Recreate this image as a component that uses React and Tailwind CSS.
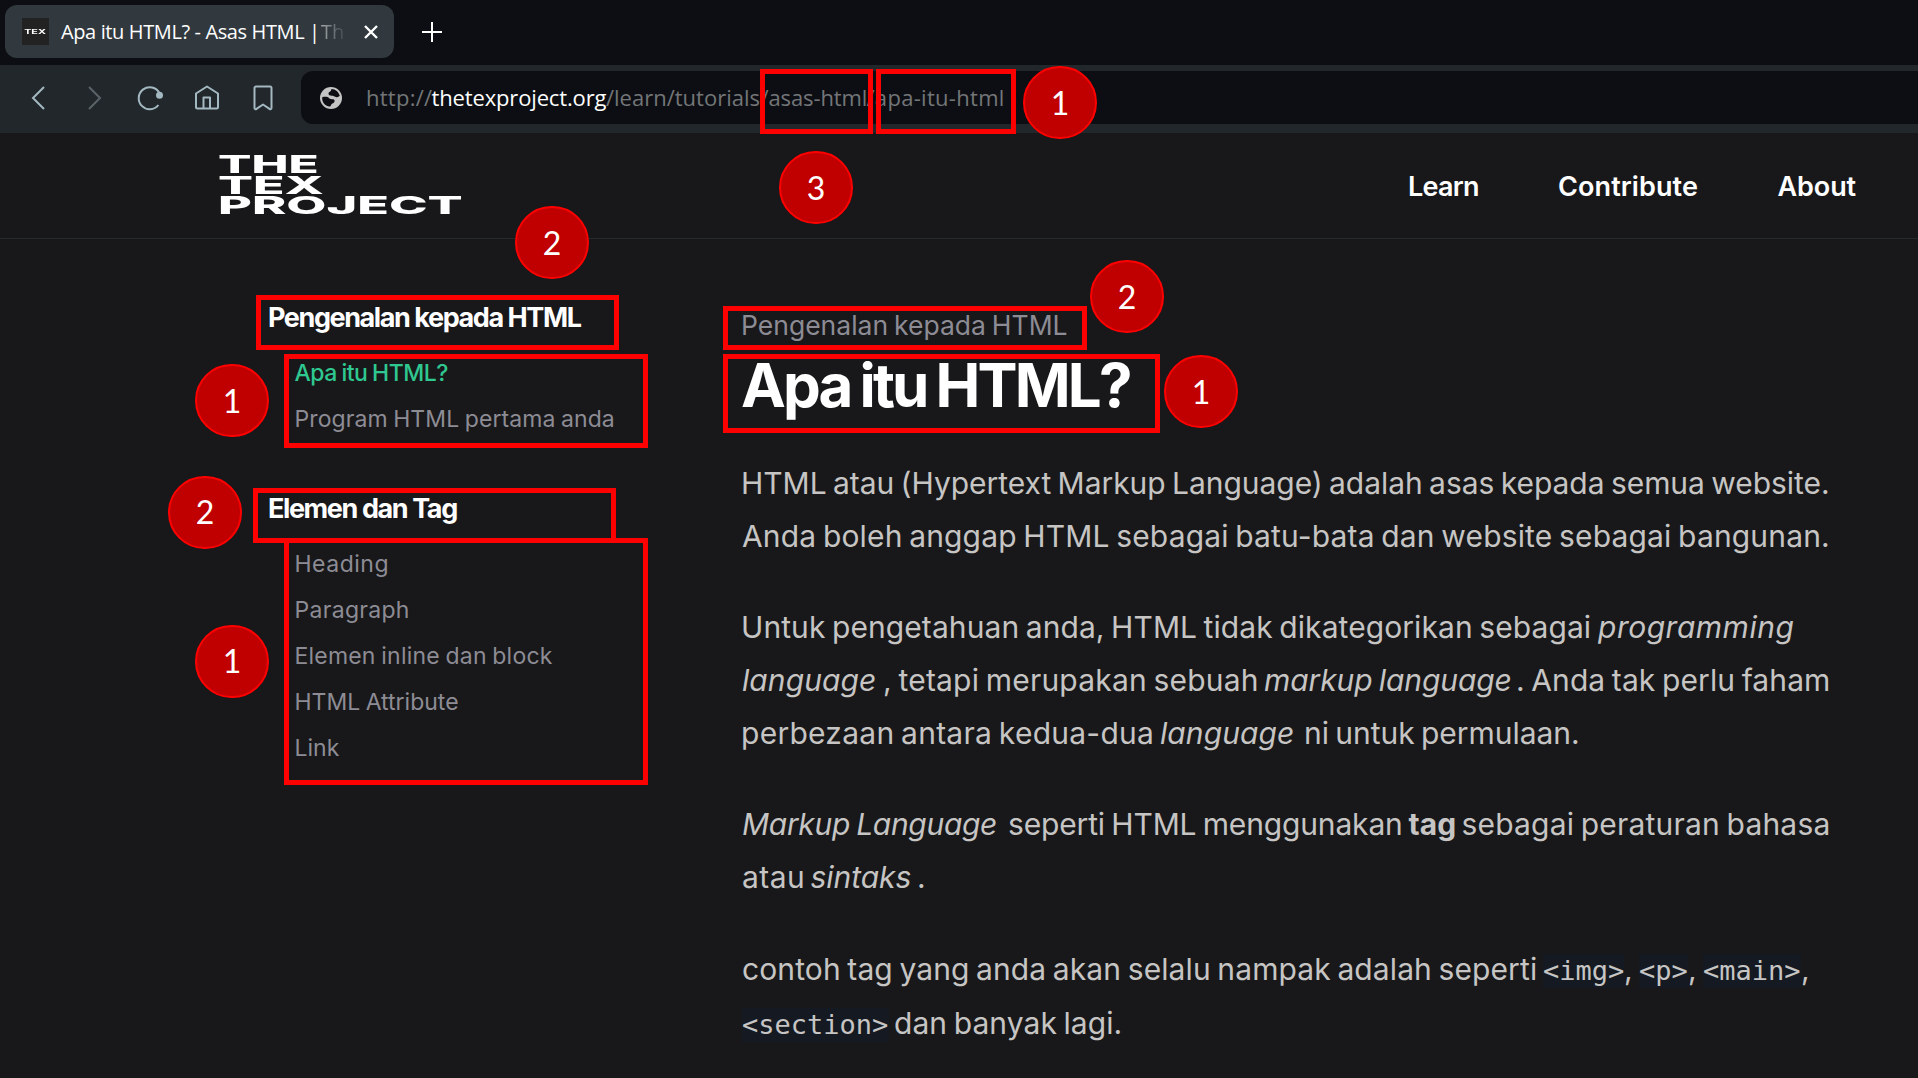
import React from "react";

function Seg({ className = "", children }) {
  return <span className={`block shrink-0 ${className}`}>{children}</span>;
}

function Line({ className = "", children }) {
  return <span className={`flex h-[52.6px] items-baseline leading-[52.6px] ${className}`}>{children}</span>;
}

function Code({ className, children }) {
  return (
    <code className={`block h-[34px] shrink-0 bg-[#151a22] font-['DejaVu_Sans_Mono',monospace] text-[27px] leading-[34px] ${className}`}>
      {children}
    </code>
  );
}

function TabStrip() {
  return (
    <div className="flex h-[65px] items-start bg-[#0d0e13] pl-[5px] pt-[5px]">
      <div className="flex h-[53px] w-[389px] items-center rounded-xl bg-[#31393e] pl-[17px] font-['Open_Sans',sans-serif] text-[20px] text-white">
        <span className="flex h-[27px] w-[27px] items-center justify-center bg-[#222222] font-['Inter',sans-serif] text-[6px] font-bold leading-none">
          <span className="scale-x-[1.8]">TEX</span>
        </span>
        <span className="ml-3 w-[260px] whitespace-nowrap tracking-[-0.38px]">Apa itu HTML? - Asas HTML |</span>
        <span className="w-[24px] bg-gradient-to-r from-[#a4a8ab] to-[#41494e] bg-clip-text text-transparent">Th</span>
        <svg className="ml-[19px] h-[14px] w-[14px]" viewBox="0 0 14 14" fill="none" stroke="white" strokeWidth="2.4">
          <path d="M1 1l12 12M13 1L1 13" />
        </svg>
      </div>
      <svg className="ml-7 mt-[17px] h-5 w-5" viewBox="0 0 20 20" fill="none" stroke="white" strokeWidth="2">
        <path d="M10 0v20M0 10h20" />
      </svg>
    </div>
  );
}

function Toolbar() {
  return (
    <div className="flex h-[68px] items-start bg-[#22272b] text-[#a3b8c0]">
      <div className="flex h-[65px] shrink-0 items-center pl-[31px]">
        <svg className="h-6 w-[14px]" viewBox="0 0 14 24" fill="none" stroke="currentColor" strokeWidth="2">
          <path d="M13 1L2 12l11 11" />
        </svg>
        <svg className="ml-[43px] h-6 w-[14px] text-[#596368]" viewBox="0 0 14 24" fill="none" stroke="currentColor" strokeWidth="2">
          <path d="M1 1l11 11L1 23" />
        </svg>
        <svg className="ml-[35px] h-[26px] w-[28px]" viewBox="0 0 28 26" fill="none" stroke="currentColor" strokeWidth="2">
          <path d="M21.4 20A11 11 0 1 1 22.4 8" />
          <circle cx="22.5" cy="10.3" r="3.500" fill="currentColor" stroke="none" />
        </svg>
        <svg className="ml-[29px] h-[25px] w-[26px]" viewBox="0 0 26 25" fill="none" stroke="currentColor" strokeWidth="2" strokeLinejoin="round">
          <path d="M2 8.5L13 1.5l11 7V22a1.5 1.5 0 0 1-1.5 1.5h-19A1.5 1.5 0 0 1 2 22z" />
          <path d="M9.5 23.5V12.5h6.5v11" />
        </svg>
        <svg className="ml-[33px] h-[26px] w-5" viewBox="0 0 20 26" fill="none" stroke="currentColor" strokeWidth="2" strokeLinejoin="round">
          <path d="M3 1.5h14a1.5 1.5 0 0 1 1.5 1.5v20a1.2 1.2 0 0 1-2 .9L10 19.5l-6.5 4.4a1.2 1.2 0 0 1-2-.9V3A1.5 1.5 0 0 1 3 1.5z" />
        </svg>
      </div>
      <div className="ml-[28px] mt-[6px] flex h-[53px] flex-1 items-center whitespace-nowrap rounded-l-xl bg-[#0d0e13] pl-[19px] font-['Open_Sans',sans-serif] text-[22px] text-[#737678]">
        <svg className="h-[22px] w-[22px]" viewBox="0 0 22 22">
          <circle cx="11" cy="11" r="11" fill="#c4c4c4" />
          <path
            d="M2.2 10.2C4.5 9.6 8 9.5 9 11c.8 1.5 2.5 1 4.2 1.3 1.8.3 1.8 2.4.6 3.4-1 .9-2 .7-2.6 2-.4 1-.8 1.9-1.7 1.800C5 19 1.8 15 2.2 10.200z"
            fill="#0d0e13"
          />
          <path
            d="M11.5 2c4 .2 7.3 3 8.3 6.800-1 1.200-2.600 1.700-4 1.200-1.700-.6-2.200-1.300-4-1.300-1.700 0-3.600-.6-3.300-2.400.2-1.300 1.600-1.500 2.300-2.400z"
            fill="#0d0e13"
          />
        </svg>
        <span className="ml-[24px] w-[65.5px] shrink-0 tracking-[0.25px]">http://</span>
        <span className="w-[174.5px] shrink-0 tracking-[-0.15px] text-white">thetexproject.org</span>
        <span className="w-[154.5px] shrink-0">/learn/tutorials</span>
        <span className="w-[106px] shrink-0 tracking-[-0.1px]">/asas-html</span>
        <span className="shrink-0 tracking-[0.3px]">/apa-itu-html</span>
      </div>
    </div>
  );
}

function Header() {
  return (
    <header className="flex h-[106px] items-start border-b border-[#262b2e] pl-[217.5px] pr-[60px] text-white">
      <div className="flex flex-col items-start pt-[21px] text-[25px] font-extrabold leading-[20.6px]">
        <span className="origin-left scale-x-[1.98]">THE</span>
        <span className="origin-left scale-x-[2.07]">TEX</span>
        <span className="origin-left scale-x-[2.08]">PROJECT</span>
      </div>
      <nav className="ml-auto mt-[33px] flex text-[27px] font-semibold leading-[42px]">
        <a className="w-[150px] tracking-[-0.75px]">Learn</a>
        <a className="w-[219.5px] tracking-[0.1px]">Contribute</a>
        <a className="w-[80.5px] tracking-[-0.1px]">About</a>
      </nav>
    </header>
  );
}

function Sidebar() {
  return (
    <aside className="w-[474px] shrink-0 whitespace-nowrap pt-[59px]">
      <h3 className="text-[27px] font-bold leading-10 tracking-[-1.42px] text-white">Pengenalan kepada HTML</h3>
      <ul className="mt-3 pl-[26.5px] text-[23px] leading-[46px] text-[#8d8c95]">
        <li className="font-medium tracking-[-0.5px] text-[#2fc890] [word-spacing:-1px]">Apa itu HTML?</li>
        <li className="tracking-[0.08px] [word-spacing:-1px]">Program HTML pertama anda</li>
      </ul>
      <h3 className="mt-[46.6px] text-[27px] font-bold leading-10 tracking-[-1.4px] text-white">Elemen dan Tag</h3>
      <ul className="mt-[12.4px] pl-[26.5px] text-[23px] leading-[46px] text-[#8d8c95]">
        <li className="tracking-[0.5px]">Heading</li>
        <li className="tracking-[0.3px]">Paragraph</li>
        <li className="tracking-[0.2px] [word-spacing:-1px]">Elemen inline dan block</li>
        <li className="[word-spacing:-1px]">HTML Attribute</li>
        <li>Link</li>
      </ul>
    </aside>
  );
}

function Article() {
  return (
    <article className="whitespace-nowrap pt-[66.4px] text-[#c6c5c4]">
      <div className="-ml-px text-[26.5px] leading-10 text-[#8d8c95] [word-spacing:-1.5px]">Pengenalan kepada HTML</div>
      <h1 className="-ml-px mt-1 text-[60px] font-bold leading-[72px] tracking-[-2.82px] text-white [word-spacing:-2.5px]">Apa itu HTML?</h1>
      <div className="mt-[35.7px] flex flex-col gap-[39.1px] text-[30px] [word-spacing:-2px]">
        <p>
          <Line><Seg className="-ml-px tracking-[-0.04px]">HTML atau (Hypertext Markup Language) adalah asas kepada semua website.</Seg></Line>
          <Line><Seg className="tracking-[0.16px]">Anda boleh anggap HTML sebagai batu-bata dan website sebagai bangunan.</Seg></Line>
        </p>
        <p>
          <Line className="-ml-px">
            <Seg className="w-[857px] tracking-[0.08px]">Untuk pengetahuan anda, HTML tidak dikategorikan sebagai</Seg>
            <Seg className="italic tracking-[0.5px]">programming</Seg>
          </Line>
          <Line>
            <Seg className="w-[141px] italic tracking-[0.09px]">language</Seg>
            <Seg className="w-[381px] tracking-[0.2px]">, tetapi merupakan sebuah</Seg>
            <Seg className="w-[252px] italic tracking-[-0.1px]">markup language</Seg>
            <Seg className="tracking-[0.1px]">. Anda tak perlu faham</Seg>
          </Line>
          <Line className="-ml-px">
            <Seg className="w-[419px] tracking-[0.26px]">perbezaan antara kedua-dua</Seg>
            <Seg className="w-[144px] italic tracking-[0.09px]">language</Seg>
            <Seg className="tracking-[-0.04px]">ni untuk permulaan.</Seg>
          </Line>
        </p>
        <p>
          <Line>
            <Seg className="w-[266px] italic tracking-[-0.31px]">Markup Language</Seg>
            <Seg className="w-[400.5px] tracking-[-0.15px]">seperti HTML menggunakan</Seg>
            <Seg className="w-[53px] font-bold tracking-[0.15px]">tag</Seg>
            <Seg className="tracking-[0.19px]">sebagai peraturan bahasa</Seg>
          </Line>
          <Line>
            <Seg className="w-[68.5px] tracking-[0.45px]">atau</Seg>
            <Seg className="w-[106.5px] italic tracking-[-0.05px]">sintaks</Seg>
            <Seg>.</Seg>
          </Line>
        </p>
        <p>
          <Line className="mb-[2.1px]">
            <Seg className="w-[801px] tracking-[0.11px]">contoh tag yang anda akan selalu nampak adalah seperti</Seg>
            <Code className="w-[81px]">&lt;img&gt;</Code>
            <Seg className="w-[15px]">,</Seg>
            <Code className="w-[49px]">&lt;p&gt;</Code>
            <Seg className="w-[15px]">,</Seg>
            <Code className="w-[98px]">&lt;main&gt;</Code>
            <Seg>,</Seg>
          </Line>
          <Line>
            <Code className="w-[147px]">&lt;section&gt;</Code>
            <Seg className="ml-[5px] tracking-[0.08px]">dan banyak lagi.</Seg>
          </Line>
        </p>
      </div>
    </article>
  );
}

const boxes = [
  "left-[760px] top-[69px] h-[65px] w-[113px]",
  "left-[876px] top-[69px] h-[65px] w-[140px]",
  "left-[256px] top-[295px] h-[55px] w-[363px]",
  "left-[284px] top-[354px] h-[94px] w-[364px]",
  "left-[253px] top-[488px] h-[55px] w-[363px]",
  "left-[284px] top-[538px] h-[247px] w-[364px]",
  "left-[723px] top-[306px] h-[44px] w-[364px]",
  "left-[723px] top-[354px] h-[79px] w-[437px]",
];

const badges = [
  ["1", "left-[1023px] top-[66px]"],
  ["3", "left-[779px] top-[151px]"],
  ["2", "left-[515px] top-[206px]"],
  ["1", "left-[195px] top-[364px]"],
  ["2", "left-[168px] top-[475.5px]"],
  ["1", "left-[195px] top-[624.5px]"],
  ["2", "left-[1090px] top-[260px]"],
  ["1", "left-[1164px] top-[355px]"],
];

export default function App() {
  return (
    <div className="relative h-[1078px] w-[1918px] overflow-hidden bg-[#18181a] font-['Inter',sans-serif]">
      <TabStrip />
      <Toolbar />
      <Header />
      <main className="flex pl-[268px]">
        <Sidebar />
        <Article />
      </main>
      {boxes.map((place) => (
        <div key={place} className={`absolute border-[5px] border-[#ff0000] ${place}`} />
      ))}
      {badges.map(([label, place]) => (
        <div
          key={place}
          className={`absolute flex h-[73px] w-[74px] items-center justify-center rounded-full border-2 border-[#ff0000] bg-[#c00000] font-['Lato',sans-serif] text-[32px] leading-none text-white ${place}`}
        >
          {label}
        </div>
      ))}
    </div>
  );
}
